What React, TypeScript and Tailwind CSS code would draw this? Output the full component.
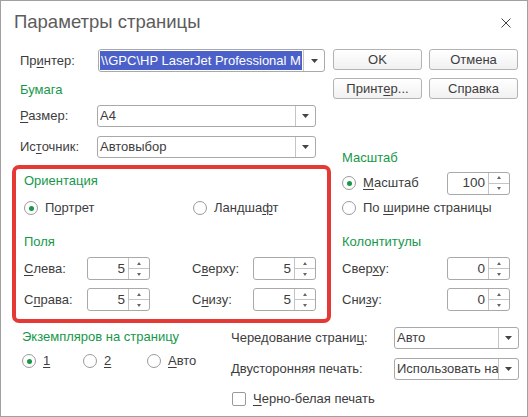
import React from 'react';

const GREEN = 'text-[#16984a]';

const U: React.FC<{ children: React.ReactNode }> = ({ children }) => (
  <span className="underline underline-offset-[2px] decoration-[1px]">{children}</span>
);

const Arrow: React.FC = () => (
  <svg width="7" height="4" viewBox="0 0 7 4">
    <path d="M0 0 H7 L3.5 4 Z" fill="#444" />
  </svg>
);

const Combo: React.FC<{ width: string; children: React.ReactNode }> = ({ width, children }) => (
  <div className={`${width} h-[22px] flex border border-[#a9a9a9] rounded-[3px] bg-white`}>
    <div className="flex-1 flex items-center pl-[2px] overflow-hidden whitespace-nowrap">{children}</div>
    <div className="w-[20px] border-l border-[#c4c4c4] flex items-center justify-center">
      <Arrow />
    </div>
  </div>
);

const Spin: React.FC<{ value: string }> = ({ value }) => (
  <div className="w-[63px] h-[23px] flex border border-[#a9a9a9] rounded-[3px] bg-white">
    <div className="flex-1 flex items-center justify-end pr-[3px] text-[13.5px]">{value}</div>
    <div className="w-[21px] border-l border-[#c4c4c4] flex flex-col">
      <div className="flex-1 flex items-center justify-center border-b border-[#c4c4c4]">
        <svg width="4" height="3" viewBox="0 0 4 3"><path d="M0 3 H4 L2 0 Z" fill="#666" /></svg>
      </div>
      <div className="flex-1 flex items-center justify-center">
        <svg width="4" height="3" viewBox="0 0 4 3"><path d="M0 0 H4 L2 3 Z" fill="#666" /></svg>
      </div>
    </div>
  </div>
);

const Radio: React.FC<{ checked?: boolean; children: React.ReactNode; className?: string }> = ({ checked, children, className }) => (
  <div className={`flex items-center h-[16px] ${className ?? ''}`}>
    <div className="w-[14px] h-[14px] rounded-full border border-[#9a9a9a] bg-white flex items-center justify-center">
      {checked && <div className="w-[5px] h-[5px] rounded-full bg-[#16984a]" />}
    </div>
    <span className="ml-[7px]">{children}</span>
  </div>
);

const Button: React.FC<{ children: React.ReactNode }> = ({ children }) => (
  <div className="w-[89px] h-[21px] flex items-center justify-center border border-[#b3b3b3] rounded-[3px] bg-gradient-to-b from-white to-[#f1f1f1]">
    {children}
  </div>
);

const App: React.FC = () => {
  return (
    <div
      className="w-[528px] h-[417px] border border-[#a0a0a0] bg-white flex flex-col text-[13px] text-[#3d3d3d] leading-[16px]"
      style={{ fontFamily: '"Liberation Sans", Arial, sans-serif' }}
    >
      {/* title bar */}
      <div className="h-[48px] flex items-start justify-between pl-[13px] pr-[16px] pt-[10px]">
        <h1 className="text-[18.5px] leading-[22px] text-[#5c5c5c]">Параметры страницы</h1>
        <svg width="10" height="10" viewBox="0 0 10 10" className="mt-[7px]">
          <path d="M0.5 0.5 L9.5 9.5 M9.5 0.5 L0.5 9.5" stroke="#444" strokeWidth="1" />
        </svg>
      </div>

      <div className="flex">
        {/* left column */}
        <div className="w-[330px] pl-[11px] flex flex-col">
          <div className="flex items-center h-[23px] pl-[8px]">
            <span className="w-[78px]">Пр<U>и</U>нтер:</span>
            <div className="w-[227px] h-[23px] flex border border-[#a9a9a9] rounded-[3px] bg-white">
              <div className="flex-1 flex items-center pl-[1px] overflow-hidden whitespace-nowrap">
                <span className="bg-[#4b60c8] text-white px-[1px] leading-[19px]">{'\\\\GPC\\HP LaserJet Professional M'}</span>
              </div>
              <div className="w-[21px] border-l border-[#c4c4c4] flex items-center justify-center">
                <Arrow />
              </div>
            </div>
          </div>
          <div className={`mt-[10px] pl-[8px] ${GREEN}`}>Бумага</div>
          <div className="mt-[7px] flex items-center pl-[8px]">
            <span className="w-[77px]"><U>Р</U>азмер:</span>
            <Combo width="w-[219px]"><span>A4</span></Combo>
          </div>
          <div className="mt-[9px] flex items-center pl-[8px]">
            <span className="w-[77px]">Ис<U>т</U>очник:</span>
            <Combo width="w-[219px]"><span>Автовыбор</span></Combo>
          </div>

          {/* highlighted frame */}
          <div className="mt-[7px] h-[158px] border-4 border-[#e53935] rounded-[7px] flex flex-col pl-[8px] pt-[4px]">
            <div className={GREEN}>Ориентация</div>
            <div className="mt-[11px] flex">
              <Radio checked className="w-[169px]">П<U>о</U>ртрет</Radio>
              <Radio>Ландша<U>ф</U>т</Radio>
            </div>
            <div className={`mt-[18px] ${GREEN}`}>Поля</div>
            <div className="mt-[7px] flex items-center">
              <span className="w-[63px]"><U>С</U>лева:</span>
              <Spin value="5" />
              <span className="ml-[42px] w-[61px]">С<U>в</U>ерху:</span>
              <Spin value="5" />
            </div>
            <div className="mt-[8px] flex items-center">
              <span className="w-[63px]">С<U>п</U>рава:</span>
              <Spin value="5" />
              <span className="ml-[42px] w-[61px]">С<U>н</U>изу:</span>
              <Spin value="5" />
            </div>
          </div>
        </div>

        {/* right column */}
        <div className="flex-1 flex flex-col pl-[2px]">
          <div className="flex gap-[7px]">
            <Button>OK</Button>
            <Button>Отмена</Button>
          </div>
          <div className="flex gap-[7px] mt-[8px]">
            <Button>Принт<U>е</U>р...</Button>
            <Button>Справка</Button>
          </div>
          <div className="pl-[9px] flex flex-col">
            <div className={`mt-[51px] ${GREEN}`}>Масштаб</div>
            <div className="mt-[6px] h-[22px] flex items-center">
              <Radio checked className="w-[105px]"><U>М</U>асштаб</Radio>
              <Spin value="100" />
            </div>
            <Radio className="mt-[6px]">По <U>ш</U>ирине страницы</Radio>
            <div className={`mt-[18px] ${GREEN}`}>Колонтитулы</div>
            <div className="mt-[7px] flex items-center">
              <span className="w-[105px]">Свер<U>х</U>у:</span>
              <Spin value="0" />
            </div>
            <div className="mt-[8px] flex items-center">
              <span className="w-[105px]">Сни<U>з</U>у:</span>
              <Spin value="0" />
            </div>
          </div>
        </div>
      </div>

      {/* bottom */}
      <div className="flex">
        <div className="w-[230px] pl-[21px] flex flex-col">
          <div className={`mt-[6px] ${GREEN}`}>Экземпляров на страницу</div>
          <div className="mt-[8px] flex">
            <Radio checked className="w-[61px]"><U>1</U></Radio>
            <Radio className="w-[64px]"><U>2</U></Radio>
            <Radio><U>А</U>вто</Radio>
          </div>
        </div>
        <div className="flex-1 flex flex-col">
          <div className="mt-[4px] flex items-center">
            <span className="w-[163px]">Чередование страни<U>ц</U>:</span>
            <Combo width="w-[125px]"><span>Авто</span></Combo>
          </div>
          <div className="mt-[9px] flex items-center">
            <span className="w-[163px]">Двусторонняя печать:</span>
            <Combo width="w-[125px]"><span>Использовать на</span></Combo>
          </div>
          <div className="mt-[11px] flex items-center h-[16px] pl-[1px]">
            <div className="w-[14px] h-[14px] rounded-[2px] border border-[#9a9a9a] bg-white" />
            <span className="ml-[7px]"><U>Ч</U>ерно-белая печать</span>
          </div>
        </div>
      </div>
    </div>
  );
};

export default App;
